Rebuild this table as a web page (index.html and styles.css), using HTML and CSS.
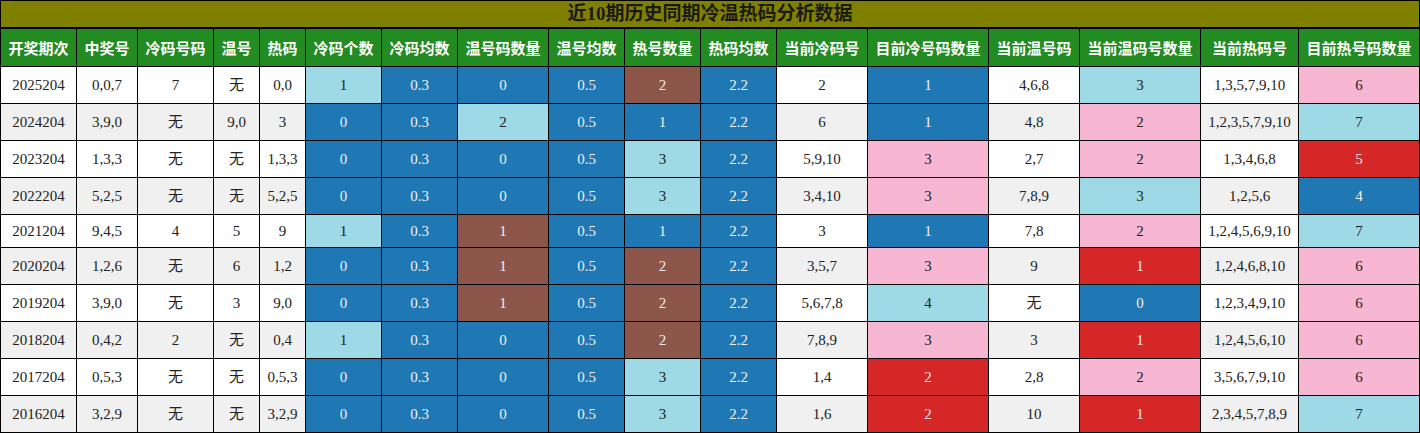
FILE: index.html
```html
<!DOCTYPE html>
<html lang="zh">
<head>
<meta charset="utf-8">
<title>近10期历史同期冷温热码分析数据</title>
<link rel="stylesheet" href="styles.css">
</head>
<body>
<div class="title">近10期历史同期冷温热码分析数据</div>
<table class="grid">
<colgroup>
<col class="w76"><col class="w61"><col class="w76"><col class="w46"><col class="w46"><col class="w76"><col class="w76"><col class="w91"><col class="w76"><col class="w76"><col class="w76"><col class="w91"><col class="w121"><col class="w91"><col class="w121"><col class="w98"><col class="w121">
</colgroup>
<thead>
<tr><th>开奖期次</th><th>中奖号</th><th>冷码号码</th><th>温号</th><th>热码</th><th>冷码个数</th><th>冷码均数</th><th>温号码数量</th><th>温号均数</th><th>热号数量</th><th>热码均数</th><th>当前冷码号</th><th>目前冷号码数量</th><th>当前温号码</th><th>当前温码号数量</th><th>当前热码号</th><th>目前热号码数量</th></tr>
</thead>
<tbody>
<tr><td>2025204</td><td>0,0,7</td><td>7</td><td>无</td><td>0,0</td><td class="lb">1</td><td class="db">0.3</td><td class="db">0</td><td class="db">0.5</td><td class="br">2</td><td class="db">2.2</td><td>2</td><td class="db">1</td><td>4,6,8</td><td class="lb">3</td><td>1,3,5,7,9,10</td><td class="pk">6</td></tr>
<tr><td>2024204</td><td>3,9,0</td><td>无</td><td>9,0</td><td>3</td><td class="db">0</td><td class="db">0.3</td><td class="lb">2</td><td class="db">0.5</td><td class="db">1</td><td class="db">2.2</td><td>6</td><td class="db">1</td><td>4,8</td><td class="pk">2</td><td>1,2,3,5,7,9,10</td><td class="lb">7</td></tr>
<tr><td>2023204</td><td>1,3,3</td><td>无</td><td>无</td><td>1,3,3</td><td class="db">0</td><td class="db">0.3</td><td class="db">0</td><td class="db">0.5</td><td class="lb">3</td><td class="db">2.2</td><td>5,9,10</td><td class="pk">3</td><td>2,7</td><td class="pk">2</td><td>1,3,4,6,8</td><td class="rd">5</td></tr>
<tr><td>2022204</td><td>5,2,5</td><td>无</td><td>无</td><td>5,2,5</td><td class="db">0</td><td class="db">0.3</td><td class="db">0</td><td class="db">0.5</td><td class="lb">3</td><td class="db">2.2</td><td>3,4,10</td><td class="pk">3</td><td>7,8,9</td><td class="lb">3</td><td>1,2,5,6</td><td class="db">4</td></tr>
<tr class="short"><td>2021204</td><td>9,4,5</td><td>4</td><td>5</td><td>9</td><td class="lb">1</td><td class="db">0.3</td><td class="br">1</td><td class="db">0.5</td><td class="db">1</td><td class="db">2.2</td><td>3</td><td class="db">1</td><td>7,8</td><td class="pk">2</td><td>1,2,4,5,6,9,10</td><td class="lb">7</td></tr>
<tr><td>2020204</td><td>1,2,6</td><td>无</td><td>6</td><td>1,2</td><td class="db">0</td><td class="db">0.3</td><td class="br">1</td><td class="db">0.5</td><td class="br">2</td><td class="db">2.2</td><td>3,5,7</td><td class="pk">3</td><td>9</td><td class="rd">1</td><td>1,2,4,6,8,10</td><td class="pk">6</td></tr>
<tr><td>2019204</td><td>3,9,0</td><td>无</td><td>3</td><td>9,0</td><td class="db">0</td><td class="db">0.3</td><td class="br">1</td><td class="db">0.5</td><td class="br">2</td><td class="db">2.2</td><td>5,6,7,8</td><td class="lb">4</td><td>无</td><td class="db">0</td><td>1,2,3,4,9,10</td><td class="pk">6</td></tr>
<tr><td>2018204</td><td>0,4,2</td><td>2</td><td>无</td><td>0,4</td><td class="lb">1</td><td class="db">0.3</td><td class="db">0</td><td class="db">0.5</td><td class="br">2</td><td class="db">2.2</td><td>7,8,9</td><td class="pk">3</td><td>3</td><td class="rd">1</td><td>1,2,4,5,6,10</td><td class="pk">6</td></tr>
<tr><td>2017204</td><td>0,5,3</td><td>无</td><td>无</td><td>0,5,3</td><td class="db">0</td><td class="db">0.3</td><td class="db">0</td><td class="db">0.5</td><td class="lb">3</td><td class="db">2.2</td><td>1,4</td><td class="rd">2</td><td>2,8</td><td class="pk">2</td><td>3,5,6,7,9,10</td><td class="pk">6</td></tr>
<tr><td>2016204</td><td>3,2,9</td><td>无</td><td>无</td><td>3,2,9</td><td class="db">0</td><td class="db">0.3</td><td class="db">0</td><td class="db">0.5</td><td class="lb">3</td><td class="db">2.2</td><td>1,6</td><td class="rd">2</td><td>10</td><td class="rd">1</td><td>2,3,4,5,7,8,9</td><td class="lb">7</td></tr>
</tbody>
</table>
</body>
</html>
```
FILE: styles.css
```css
html, body {
  margin: 0;
  padding: 0;
  background: #ffffff;
}
body {
  width: 1420px;
  font-family: "Liberation Serif", "Noto Sans CJK SC", serif;
}
.title {
  box-sizing: border-box;
  width: 1420px;
  height: 28px;
  border: 1px solid #000;
  background: #808000;
  color: #1a1a1a;
  font-weight: bold;
  font-size: 19px;
  line-height: 26px;
  text-align: center;
}
.grid {
  width: 1420px;
  table-layout: fixed;
  border-collapse: collapse;
  font-size: 15px;
  color: #222;
}
.w46 { width: 46px; }
.w61 { width: 61px; }
.w76 { width: 76px; }
.w91 { width: 91px; }
.w98 { width: 98px; }
.w121 { width: 121px; }
.grid thead tr { height: 38px; }
.grid tbody tr { height: 37px; }
.grid tbody tr.short { height: 33px; }
.grid tbody tr:nth-child(even) { background: #f0f0f0; }
.grid th,
.grid td {
  border: 1px solid #000;
  padding: 0;
  line-height: 18px;
  text-align: center;
  vertical-align: middle;
  white-space: nowrap;
  overflow: hidden;
}
.grid th {
  background: #228b22;
  color: #ffffff;
  font-family: "Noto Sans CJK SC", sans-serif;
  font-weight: bold;
  font-size: 15px;
}
.grid td.lb { background: #9edae5; color: #222; }
.grid td.pk { background: #f7b6d2; color: #222; }
.grid td.db { background: #1f77b4; color: #eef2f6; }
.grid td.br { background: #8c564b; color: #f2ecea; }
.grid td.rd { background: #d62728; color: #f6e6e6; }
```
